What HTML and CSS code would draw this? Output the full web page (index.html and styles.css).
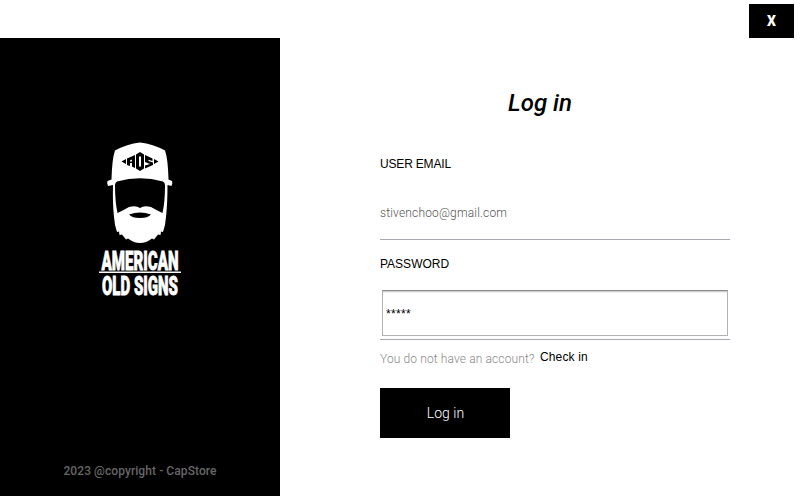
FILE: index.html
```html
<!DOCTYPE html>
<html lang="en">
<head>
<meta charset="utf-8">
<title>Log in</title>
<link rel="stylesheet" href="styles.css">
</head>
<body>
<header class="titlebar"><button class="close" type="button">X</button></header>
<main class="content">
  <aside class="brand">
    <svg class="logo" viewBox="0 0 100 170" role="img" aria-label="American Old Signs">
      <path class="white" d="M23 50 L18 51 Q16.500 48 17.500 46 L21.500 44.500 Q22 24 25 15.500 Q37 9 50 7.500 Q63 9 75 15.500 Q78 24 78.500 44.500 L82 46 Q83 48 81.500 51 L77.500 50 Q77.500 68 76 82 Q75.500 90 73 97 L71 96.500 L70.500 100 L68 99.500 L64 104.500 L62 103.500 Q56 108 50 108 Q44 108 38 103.500 L36 104.500 L32 99.500 L29.500 100 L29 96.500 L27 97 Q24.500 90 24 82 Q22.500 68 23 50 Z"/>
      <path d="M25 50 Q25 47.500 27 46.500 Q50 40 73 46.500 Q75 47.500 75 50 Q75 67 72.500 78 Q66 75 61 72 Q54 70 50 73 Q46 70 39 72 Q34 75 27.500 78 Q25 67 25 50 Z"/>
      <path d="M39 79.500 Q50 75.500 61 79.500 Q58 83 50 83 Q42 83 39 79.500 Z"/>
      <path d="M31.500 26.500 L36 24 V29 Z M68.500 26.500 L64 24 V29 Z"/>
      <path d="M37 30 V23.500 L45 20 V33 L42 31.500 V28 H40 V31 Z M46 19.500 L50 17 L54 19.500 V33.500 L50 36 L46 33.500 Z M55 20 L62.500 23.500 V26 L58.500 24.700 V26 L63 27.500 V30 L55 33.500 V30.500 L60 29 L55 27 Z"/>
      <path class="white" d="M40 25.500 L42 24.500 V26.500 H40 Z M49 21.500 H51 V31.500 H49 Z"/>
      <text class="wordmark" x="11.500" y="134.500" textLength="77" lengthAdjust="spacingAndGlyphs">AMERICAN</text>
      <path class="white" d="M9 136.500 H91 V138 H9 Z"/>
      <text class="wordmark" x="12" y="160" textLength="76" lengthAdjust="spacingAndGlyphs">OLD SIGNS</text>
    </svg>
    <p class="copyright">2023 @copyright - CapStore</p>
  </aside>
  <form class="login">
    <h1 class="title">Log in</h1>
    <label class="label user" for="email">USER EMAIL</label>
    <div class="field"><input class="email" id="email" type="text" value="stivenchoo@gmail.com"></div>
    <label class="label" for="password">PASSWORD</label>
    <div class="field"><input class="password" id="password" type="text" value="*****"></div>
    <p class="signup"><span class="question">You do not have an account?</span><span class="checkin">Check in</span></p>
    <button class="submit" type="button">Log in</button>
  </form>
</main>
</body>
</html>
```
FILE: styles.css
```css
* { box-sizing: border-box; }
body { margin: 0; height: 496px; overflow: hidden; background: #fff; color: #000; font-family: "Liberation Sans", sans-serif; }
button { border: 0; padding: 0; background: #000; color: #fff; }
.titlebar { height: 38px; display: flex; justify-content: flex-end; padding: 4px 6px 0 0; }
.close { width: 45px; height: 34px; font: 900 14px/34px Roboto, sans-serif; }
.content { display: grid; grid-template-columns: 280px 1fr; height: 458px; }
.brand { background: #000; display: flex; flex-direction: column; align-items: center; justify-content: space-between; padding: 97px 0 17px; }
.logo { width: 100px; height: 170px; overflow: visible; }
.white { fill: #fff; }
.wordmark { fill: #fff; stroke: #fff; stroke-width: .8; font: 900 26px Roboto, sans-serif; }
.copyright { margin: 0; color: #666; font: 500 12px/16px Roboto, sans-serif; letter-spacing: .08px; }
.login { padding: 50px 70px 0 100px; display: flex; flex-direction: column; align-items: flex-start; }
.title { margin: 0; width: 320px; height: 66px; text-align: center; font: italic 500 24px/30px Roboto, sans-serif; }
.label { height: 36px; font-size: 12px; line-height: 20px; }
.user { letter-spacing: -.18px; }
.field { width: 350px; height: 50px; border-bottom: 1px solid #a5a8b0; margin-bottom: 14px; }
.field + .signup { margin-top: -14px; }
input { display: block; outline: 0; background: #fff; }
.email { width: 100%; height: 47px; border: 0; padding: 0; color: #555; font: 300 12px/47px Roboto, sans-serif; letter-spacing: .16px; }
.password { width: 346px; height: 46px; margin: 0 2px; padding: 1px 3px 0; border: 1px solid #b2b2b2; border-top-color: #898989; box-shadow: inset 0 1px #cfcfcf, inset 0 2px #f0f0f0; font: 12px "Liberation Sans", sans-serif; letter-spacing: .3px; }
.signup { display: flex; gap: 5.5px; height: 48px; margin-bottom: 0; padding-top: 7px; font-size: 12px; line-height: 20px; }
.question { color: #888; font: 300 12px/24px Roboto, sans-serif; letter-spacing: .12px; }
.checkin { letter-spacing: .15px; }
.submit { width: 130px; height: 50px; padding-left: 1px; font: 300 14px/50px Roboto, sans-serif; }
```
